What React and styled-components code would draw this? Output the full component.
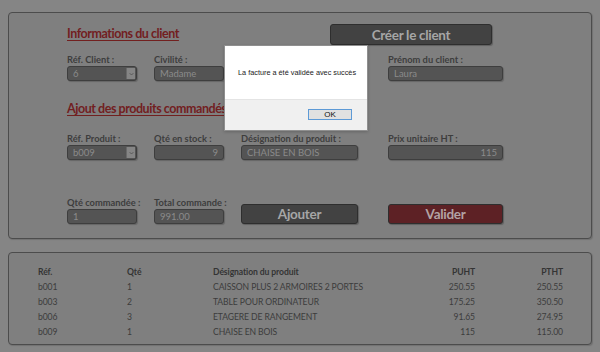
import styled, { createGlobalStyle } from "styled-components";

const GlobalStyle = createGlobalStyle`
  html, body {
    margin: 0;
    padding: 0;
    background: #858585;
  }
  body {
    font-family: Lato, "Open Sans", sans-serif;
  }
`;

const produits = [
  { ref: "b001", qte: "1", design: "CAISSON PLUS 2 ARMOIRES 2 PORTES", puht: "250.55", ptht: "250.55" },
  { ref: "b003", qte: "2", design: "TABLE POUR ORDINATEUR", puht: "175.25", ptht: "350.50" },
  { ref: "b006", qte: "3", design: "ETAGERE DE RANGEMENT", puht: "91.65", ptht: "274.95" },
  { ref: "b009", qte: "1", design: "CHAISE EN BOIS", puht: "115", ptht: "115.00" },
];

function App() {
  return (
    <Page>
      <GlobalStyle />
      <Panel>
        <HeadRow>
          <Title>Informations du client</Title>
          <DarkButton $width="162px">Créer le client</DarkButton>
        </HeadRow>
        <Grid $top="9px">
          <Field>
            <Label>Réf. Client :</Label>
            <Select value="6" />
          </Field>
          <Field>
            <Label>Civilité :</Label>
            <Input>Madame</Input>
          </Field>
          <Field />
          <Field>
            <Label>Prénom du client :</Label>
            <Input>Laura</Input>
          </Field>
        </Grid>

        <Title $top="21px">Ajout des produits commandés</Title>
        <Grid $top="17px">
          <Field>
            <Label>Réf. Produit :</Label>
            <Select value="b009" />
          </Field>
          <Field>
            <Label>Qté en stock :</Label>
            <Input $right>9</Input>
          </Field>
          <Field>
            <Label>Désignation du produit :</Label>
            <Input>CHAISE EN BOIS</Input>
          </Field>
          <Field>
            <Label>Prix unitaire HT :</Label>
            <Input $right>115</Input>
          </Field>
        </Grid>

        <Grid $top="37px">
          <Field>
            <Label>Qté commandée :</Label>
            <Input>1</Input>
          </Field>
          <Field>
            <Label>Total commande :</Label>
            <Input>991.00</Input>
          </Field>
          <DarkButton $big>Ajouter</DarkButton>
          <DarkButton $big $red>Valider</DarkButton>
        </Grid>
      </Panel>

      <TablePanel>
        <Table>
          <Th>Réf.</Th>
          <Th>Qté</Th>
          <Th>Désignation du produit</Th>
          <Th $right>PUHT</Th>
          <Th $right>PTHT</Th>
          {produits.map((p) => (
            <Row key={p.ref}>
              <Td>{p.ref}</Td>
              <Td>{p.qte}</Td>
              <Td>{p.design}</Td>
              <Td $right>{p.puht}</Td>
              <Td $right>{p.ptht}</Td>
            </Row>
          ))}
        </Table>
      </TablePanel>

      <Overlay>
        <Dialog>
          <DialogBody>La facture a été validée avec succès</DialogBody>
          <DialogFooter>
            <OkButton>OK</OkButton>
          </DialogFooter>
        </Dialog>
      </Overlay>
    </Page>
  );
}

function Select({ value }) {
  return (
    <Input $select>
      {value}
      <Arrow>
        <svg width="5" height="4" viewBox="0 0 5 4">
          <path d="M0.7 1.2 L2.5 3 L4.3 1.2" fill="none" stroke="#555" strokeWidth="0.9" />
        </svg>
      </Arrow>
    </Input>
  );
}

const Page = styled.div`
  width: 600px;
  height: 352px;
  box-sizing: border-box;
  padding: 12px 8px 0 8px;
  display: flex;
  flex-direction: column;
  gap: 13px;
  background: #858585;
  position: relative;
  overflow: hidden;
`;

const Panel = styled.div`
  height: 227px;
  box-sizing: border-box;
  border: 1px solid #4c4c4c;
  border-radius: 4px;
  background: #7f7f7f;
  box-shadow: 1px 1px 1px rgba(0, 0, 0, 0.15);
  padding: 11px 0 0 58px;
`;

const HeadRow = styled.div`
  display: flex;
  align-items: flex-start;
  justify-content: space-between;
  width: 425px;
`;

const Title = styled.div`
  margin-top: ${(p) => p.$top || "3px"};
  font-size: 12.5px;
  font-weight: 700;
  color: #72201f;
  text-decoration: underline;
  text-underline-offset: 2px;
  text-decoration-thickness: 1px;
  line-height: 14px;
  letter-spacing: -0.45px;
  white-space: nowrap;
`;

const Grid = styled.div`
  display: grid;
  grid-template-columns: 70px 70px 117px 128px;
  column-gap: 17px;
  align-items: end;
  margin-top: ${(p) => p.$top};
  & > :nth-child(4) {
    width: 115px;
    justify-self: end;
  }
`;

const Field = styled.div`
  display: flex;
  flex-direction: column;
  gap: 1px;
`;

const Label = styled.div`
  font-size: 9.3px;
  font-weight: 700;
  color: #3d3d3d;
  line-height: 11px;
  white-space: nowrap;
`;

const Input = styled.div`
  position: relative;
  height: 15px;
  box-sizing: border-box;
  border: 1px solid #3e3e3e;
  border-radius: 3px;
  background: #545454;
  box-shadow: 1px 1px 1px rgba(0, 0, 0, 0.2);
  color: #8b8b8b;
  font-size: 9.5px;
  line-height: 13px;
  padding: 0 ${(p) => (p.$select ? "14px" : "5px")} 0 5px;
  text-align: ${(p) => (p.$right ? "right" : "left")};
  white-space: nowrap;
  overflow: hidden;
`;

const Arrow = styled.span`
  position: absolute;
  right: 1px;
  top: 1px;
  bottom: 1px;
  width: 8px;
  background: #858585;
  border-left: 1px solid #6a6a6a;
  display: flex;
  align-items: center;
  justify-content: center;
`;

const DarkButton = styled.div`
  width: ${(p) => p.$width || "auto"};
  height: ${(p) => (p.$big ? "20px" : "21px")};
  box-sizing: border-box;
  border: 1px solid #2e2e2e;
  border-radius: 3px;
  background: ${(p) => (p.$red ? "#5d2125" : "#424242")};
  box-shadow: 1px 1px 1px rgba(0, 0, 0, 0.25);
  color: ${(p) => (p.$red ? "#b3a3a4" : "#a6a6a6")};
  font-size: 13.5px;
  font-weight: 700;
  letter-spacing: -0.3px;
  display: flex;
  align-items: center;
  justify-content: center;
  margin-bottom: ${(p) => (p.$big ? "0" : "0")};
`;

const TablePanel = styled.div`
  height: 93px;
  box-sizing: border-box;
  border: 1px solid #4c4c4c;
  border-radius: 4px;
  background: #7f7f7f;
  box-shadow: 1px 1px 1px rgba(0, 0, 0, 0.15);
  padding: 11px 0 0 29px;
`;

const Table = styled.div`
  display: grid;
  grid-template-columns: 89px 86px 174px 88px 88px;
  grid-auto-rows: 15px;
  align-items: center;
  font-size: 8.6px;
  letter-spacing: -0.1px;
  color: #3c3c3c;
`;

const Row = styled.div`
  display: contents;
`;

const Th = styled.div`
  font-weight: 700;
  color: #343434;
  text-align: ${(p) => (p.$right ? "right" : "left")};
`;

const Td = styled.div`
  text-align: ${(p) => (p.$right ? "right" : "left")};
  white-space: nowrap;
`;

const Overlay = styled.div`
  position: absolute;
  inset: 0;
`;

const Dialog = styled.div`
  position: absolute;
  left: 224px;
  top: 45px;
  width: 144px;
  height: 86px;
  box-sizing: border-box;
  border: 1px solid #8f8f8f;
  background: #ffffff;
  display: flex;
  flex-direction: column;
  box-shadow: 0 1px 3px rgba(0, 0, 0, 0.2);
`;

const DialogBody = styled.div`
  height: 53px;
  display: flex;
  align-items: center;
  padding-left: 13px;
  font-family: "Liberation Sans", Arial, sans-serif;
  font-size: 7.3px;
  color: #1a1a1a;
  white-space: nowrap;
`;

const DialogFooter = styled.div`
  flex: 1;
  background: #f0f0f0;
  border-top: 1px solid #e4e4e4;
  display: flex;
  justify-content: flex-end;
  align-items: flex-start;
  padding: 9px 15px 0 0;
`;

const OkButton = styled.div`
  width: 44px;
  height: 11px;
  box-sizing: border-box;
  border: 1px solid #5d9ad6;
  background: #e1e1e1;
  font-family: "Liberation Sans", Arial, sans-serif;
  font-size: 8px;
  line-height: 9px;
  text-align: center;
  color: #111;
`;

export default App;
